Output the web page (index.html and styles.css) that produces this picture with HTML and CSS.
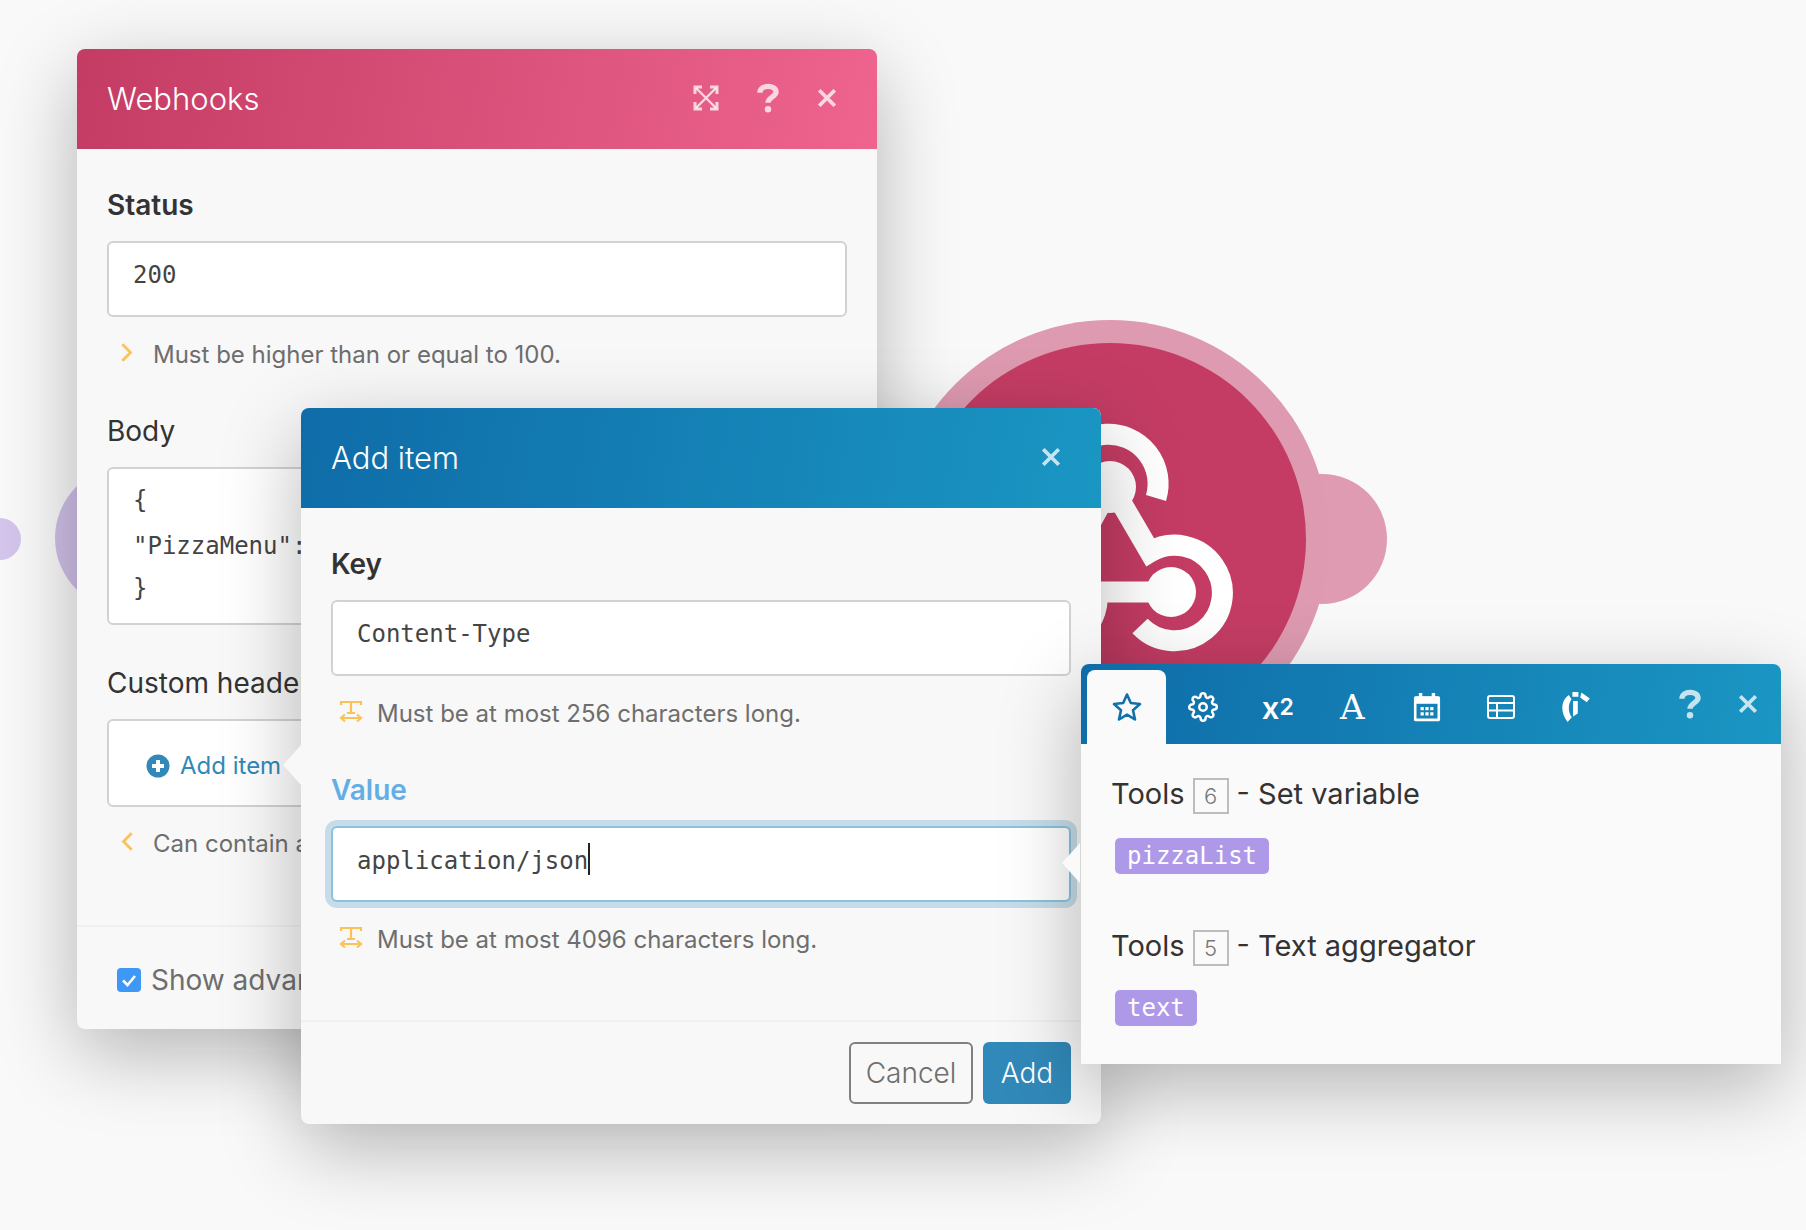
FILE: index.html
```html
<!DOCTYPE html>
<html lang="en">

<head>
    <meta charset="UTF-8">
    <title>Webhooks</title>
    <link rel="stylesheet" href="styles.css">
</head>

<body>

    <div class="canvas">

        <!-- scenario nodes behind the windows -->
        <div class="dot"></div>
        <div class="purple-node"></div>
        <svg class="node" viewBox="880 310 520 460">
            <circle cx="1322" cy="539" r="65" fill="#df9bb1" />
            <circle cx="1110" cy="539" r="219" fill="#de9ab0" />
            <circle cx="1110" cy="539" r="196" fill="#c43c64" />
            <g fill="none" stroke="#fff" stroke-width="21">
                <path d="M1156 498A49.5 49.5 0 1 0 1063 503" />
                <path d="M1112 487L1150 552A47.8 47.8 0 1 1 1140 626" />
                <path d="M1050 592H1171" />
                <path d="M1110 487L1052 592" />
                <path d="M1097 593A47 47 0 1 1 1065 553" />
            </g>
            <circle cx="1110" cy="487" r="26" fill="#fff" />
            <circle cx="1171" cy="592" r="25" fill="#fff" />
        </svg>

        <section class="window webhooks">
            <header class="head head-pink">
                <h2>Webhooks</h2>
                <div class="head-icons">
                    <svg class="ico-expand" viewBox="0 0 26 26" fill="none" stroke="currentColor" stroke-width="2.4">
                        <path d="M2 9V2H9M17 2H24V9M24 17V24H17M9 24H2V17" stroke-width="3" />
                        <path d="M3 3L23 23M23 3L3 23" />
                    </svg>
                    <svg class="ico-help" viewBox="0 0 20 28" fill="none" stroke="currentColor" stroke-width="5">
                        <path d="M2.5 9C2.5 1.500 17.500 1 17.500 8.500C17.500 13 10 13 10 18.500" />
                        <circle cx="10" cy="24.500" r="3" fill="currentColor" stroke="none" />
                    </svg>
                    <svg class="ico-close" viewBox="0 0 18 18" fill="none" stroke="currentColor" stroke-width="3.400">
                        <path d="M2 2L16 16M16 2L2 16" />
                    </svg>
                </div>
            </header>
            <div class="body">
                <label class="lbl lbl-bold">Status</label>
                <div class="inp mono">200</div>
                <p class="hint"><svg class="chev" viewBox="0 0 12 18" fill="none" stroke="#fcc25a" stroke-width="2.400"><path d="M2 2L9 9L2 16" /></svg>Must be higher than or equal to 100.</p>

                <label class="lbl">Body</label>
                <div class="inp area mono">
                    <div>{</div>
                    <div class="mid-line">"PizzaMenu":</div>
                    <div>}</div>
                </div>

                <label class="lbl lbl-after">Custom headers</label>
                <div class="inp box">
                    <svg class="plus" viewBox="0 0 24 24"><circle cx="12" cy="12" r="11.500" fill="#3189b9" /><path d="M12 6V18M6 12H18" stroke="#fff" stroke-width="4" /></svg>
                    <span class="add-link">Add item</span>
                </div>
                <p class="hint hint-tight"><svg class="chev" viewBox="0 0 12 18" fill="none" stroke="#fcc25a" stroke-width="2.400"><path d="M10 2L3 9L10 16" /></svg>Can contain arbitrary headers.</p>
            </div>
            <footer class="foot foot-left">
                <span class="check"><svg viewBox="0 0 24 24" fill="none" stroke="#fff" stroke-width="2.600"><path d="M6 12.500L10.500 17L18 8" /></svg></span>
                <span class="adv">Show advanced settings</span>
            </footer>
        </section>

        <section class="window add-window">
            <span class="tip"></span>
            <header class="head head-blue">
                <h2>Add item</h2>
                <div class="head-icons">
                    <svg class="ico-close" viewBox="0 0 18 18" fill="none" stroke="currentColor" stroke-width="3.400">
                        <path d="M2 2L16 16M16 2L2 16" />
                    </svg>
                </div>
            </header>
            <div class="body">
                <label class="lbl lbl-bold">Key</label>
                <div class="inp mono">Content-Type</div>
                <p class="hint hint-wide"><svg class="tw" viewBox="0 0 24 22" fill="none" stroke="#fcc25a" stroke-width="2.200"><path d="M2 5V2H22V5M12 2V13M8 13H16M2 18H22M6 14.500L2 18L6 21.500M18 14.500L22 18L18 21.500" /></svg>Must be at most 256 characters long.</p>

                <label class="lbl lbl-focus">Value</label>
                <div class="inp inp-focus mono">application/json<span class="caret"></span></div>
                <p class="hint hint-wide"><svg class="tw" viewBox="0 0 24 22" fill="none" stroke="#fcc25a" stroke-width="2.200"><path d="M2 5V2H22V5M12 2V13M8 13H16M2 18H22M6 14.500L2 18L6 21.500M18 14.500L22 18L18 21.500" /></svg>Must be at most 4096 characters long.</p>
            </div>
            <footer class="foot foot-right">
                <button class="btn btn-cancel">Cancel</button>
                <button class="btn btn-add">Add</button>
            </footer>
        </section>

        <section class="window tools">
            <span class="tip tip-tools"></span>
            <header class="tabs">
                <div class="tab tab-on">
                    <svg class="ti" viewBox="0 0 30 30" fill="none" stroke="#1170a9" stroke-width="2.600" stroke-linejoin="round"><path d="M15 2.500L18.800 11L28 12L21 18.200L23 27.500L15 22.700L7 27.500L9 18.200L2 12L11.200 11Z" /></svg>
                </div>
                <div class="tab">
                    <svg class="ti" viewBox="0 0 24 24" fill="none" stroke="#fff" stroke-width="2"><circle cx="12" cy="12" r="3" /><path d="M19.4 15a1.65 1.65 0 0 0 .33 1.82l.06.06a2 2 0 0 1 0 2.83 2 2 0 0 1-2.83 0l-.06-.06a1.65 1.65 0 0 0-1.82-.33 1.65 1.65 0 0 0-1 1.51V21a2 2 0 0 1-2 2 2 2 0 0 1-2-2v-.09A1.65 1.65 0 0 0 9 19.4a1.65 1.65 0 0 0-1.82.33l-.06.06a2 2 0 0 1-2.83 0 2 2 0 0 1 0-2.83l.06-.06a1.65 1.65 0 0 0 .33-1.82 1.65 1.65 0 0 0-1.51-1H3a2 2 0 0 1-2-2 2 2 0 0 1 2-2h.09A1.65 1.65 0 0 0 4.600 9a1.65 1.65 0 0 0-.33-1.82l-.06-.06a2 2 0 0 1 0-2.83 2 2 0 0 1 2.83 0l.06.06a1.65 1.65 0 0 0 1.82.33H9a1.65 1.65 0 0 0 1-1.51V3a2 2 0 0 1 2-2 2 2 0 0 1 2 2v.09a1.65 1.65 0 0 0 1 1.51 1.65 1.65 0 0 0 1.82-.33l.06-.06a2 2 0 0 1 2.83 0 2 2 0 0 1 0 2.83l-.06.06a1.65 1.65 0 0 0-.33 1.82V9a1.65 1.65 0 0 0 1.51 1H21a2 2 0 0 1 2 2 2 2 0 0 1-2 2h-.09a1.65 1.65 0 0 0-1.51 1z" /></svg>
                </div>
                <div class="tab tab-text">x<sup>2</sup></div>
                <div class="tab tab-serif">A</div>
                <div class="tab">
                    <svg class="ti" viewBox="0 0 26 28"><path d="M2 5.500H24V26H2Z" fill="none" stroke="#fff" stroke-width="2.400" stroke-linejoin="round" /><path d="M2 4H24V11H2Z" fill="#fff" /><path d="M7 1V6M19 1V6" stroke="#fff" stroke-width="3.200" /><path d="M7 14H10V17H7ZM11.500 14H14.500V17H11.500ZM16 14H19V17H16ZM7 19H10V22H7ZM11.500 19H14.500V22H11.500ZM16 19H19V22H16Z" fill="#fff" /></svg>
                </div>
                <div class="tab">
                    <svg class="ti ti-wide" viewBox="0 0 28 24" fill="none" stroke="#fff" stroke-width="2"><rect x="1" y="1" width="26" height="22" rx="2" /><path d="M1 8H27M1 15.500H27M10 8V23" /></svg>
                </div>
                <div class="tab">
                    <svg class="ti" viewBox="4 3 25 25"><path d="M9.500 28C3 20 4 10 10.500 5.500L12.800 9C9.500 13.500 10 20 13 24Z" fill="#fff" /><path d="M13.500 3H18.500V7H13.500ZM14 10.500H18V21L14 23.500ZM21 3.500L28 8.500L25.500 11.500L20 7.500Z" fill="#fff" /></svg>
                </div>
                <div class="tab-end">
                    <svg class="ico-help" viewBox="0 0 20 28" fill="none" stroke="currentColor" stroke-width="5">
                        <path d="M2.500 9C2.500 1.500 17.500 1 17.500 8.500C17.500 13 10 13 10 18.500" />
                        <circle cx="10" cy="24.500" r="3" fill="currentColor" stroke="none" />
                    </svg>
                    <svg class="ico-close" viewBox="0 0 18 18" fill="none" stroke="currentColor" stroke-width="3.400">
                        <path d="M2 2L16 16M16 2L2 16" />
                    </svg>
                </div>
            </header>
            <div class="tool-list">
                <div class="tool">
                    <div class="tool-name">Tools <span class="num">6</span> - Set variable</div>
                    <span class="tag mono">pizzaList</span>
                </div>
                <div class="tool">
                    <div class="tool-name">Tools <span class="num">5</span> - Text aggregator</div>
                    <span class="tag mono">text</span>
                </div>
            </div>
        </section>

    </div>

</body>

</html>
```

FILE: styles.css
```css
* {
    box-sizing: border-box;
}

body {
    margin: 0;
    background-color: #f9f9f9;
    font-family: Inter, "Noto Sans", sans-serif;
    color: #333;
}

.canvas {
    position: relative;
    width: 1806px;
    height: 1230px;
    overflow: hidden;
}

.mono {
    font-family: "DejaVu Sans Mono", monospace;
}

/* nodes */
.dot {
    position: absolute;
    left: -21px;
    top: 518px;
    width: 42px;
    height: 42px;
    border-radius: 50%;
    background: #d3c5ec;
}

.purple-node {
    position: absolute;
    left: 55px;
    top: 466px;
    width: 144px;
    height: 144px;
    border-radius: 50%;
    background: #cfc0e8;
}

.node {
    position: absolute;
    left: 880px;
    top: 310px;
    width: 520px;
    height: 460px;
}

/* windows */
.window {
    position: absolute;
    display: flex;
    flex-direction: column;
    background: #f8f8f8;
    border-radius: 8px;
    box-shadow: 0 24px 80px rgba(0, 0, 0, 0.28);
}

.webhooks {
    left: 77px;
    top: 49px;
    width: 800px;
    height: 980px;
}

.add-window {
    left: 301px;
    top: 408px;
    width: 800px;
    height: 716px;
}

.tools {
    left: 1081px;
    top: 664px;
    width: 700px;
    height: 400px;
    background: #fafafa;
    border-radius: 8px 8px 0 0;
}

.tip {
    position: absolute;
    left: -18px;
    top: 337px;
    width: 0;
    height: 0;
    border-top: 20px solid transparent;
    border-bottom: 20px solid transparent;
    border-right: 18px solid #f8f8f8;
}

.tip-tools {
    left: -19px;
    top: 179px;
    border-right-color: #fafafa;
    z-index: 2;
}

.head {
    display: flex;
    align-items: center;
    justify-content: space-between;
    height: 100px;
    padding: 0 40px 2px 30px;
    flex: none;
    border-radius: 8px 8px 0 0;
}

.head h2 {
    margin: 0;
    font-size: 31px;
    font-weight: 300;
    color: #fff;
}

.head-pink {
    background: linear-gradient(100deg, #c43c64, #ee648f);
}

.head-blue {
    background: linear-gradient(100deg, #0f6ca8, #1a96c3);
}

.head-icons {
    display: flex;
    align-items: center;
    gap: 38px;
    color: rgba(255, 255, 255, 0.75);
}

.ico-expand {
    width: 26px;
    height: 26px;
}

.ico-help {
    width: 22px;
    height: 30px;
}

.ico-close {
    width: 20px;
    height: 20px;
}

.body {
    flex: 1;
    padding: 36px 30px 0;
}

.lbl {
    display: block;
    height: 40px;
    line-height: 40px;
    margin-bottom: 16px;
    font-size: 28px;
    white-space: nowrap;
}

.lbl-after {
    margin-top: 38px;
}

.lbl-bold {
    font-weight: 600;
}

.lbl-focus {
    font-weight: 600;
    color: #64aee6;
}

.inp {
    height: 76px;
    padding: 17px 24px 0;
    background: #fff;
    border: 2px solid #d2d2d2;
    border-radius: 6px;
    font-size: 24px;
    line-height: 30px;
    color: #444;
}

.area {
    height: 158px;
    line-height: 44px;
    padding: 9px 24px 0;
}

.mid-line {
    padding-top: 2px;
    margin-bottom: -2px;
}

.box {
    display: flex;
    align-items: center;
    gap: 10px;
    height: 88px;
    padding: 5px 0 0 37px;
    font-family: Inter, sans-serif;
}

.plus {
    width: 24px;
    height: 24px;
}

.add-link {
    color: #3189b9;
}

.inp-focus {
    padding-top: 15px;
    border-color: #8ac3de;
    box-shadow: 0 0 0 6px #c6dde9;
}

.caret {
    display: inline-block;
    width: 2px;
    height: 32px;
    vertical-align: -6px;
    background: #222;
}

.hint {
    display: flex;
    align-items: center;
    height: 36px;
    margin: 19px 0 39px;
    font-size: 24px;
    color: #6e6e6e;
    white-space: nowrap;
}

.hint-tight {
    margin-top: 18px;
}

.chev {
    width: 14px;
    height: 21px;
    margin: -4px 19px 0 13px;
    flex: none;
}

.tw {
    width: 24px;
    height: 22px;
    margin: -4px 14px 0 8px;
    flex: none;
}

.foot {
    display: flex;
    align-items: center;
    flex: none;
    height: 104px;
    border-top: 2px solid #f0f0f0;
}

.foot-left {
    padding: 4px 0 0 40px;
}

.foot-right {
    justify-content: flex-end;
    gap: 10px;
    padding-right: 30px;
}

.check {
    width: 24px;
    height: 24px;
    border-radius: 4px;
    background: #3f97f6;
    flex: none;
}

.check svg {
    display: block;
    width: 24px;
    height: 24px;
}

.adv {
    margin-left: 10px;
    font-size: 28px;
    color: #6e6e6e;
    white-space: nowrap;
}

.btn {
    height: 62px;
    font-family: Inter, sans-serif;
    font-size: 28px;
    font-weight: 300;
    border-radius: 6px;
}

.btn-cancel {
    width: 124px;
    padding: 0;
    background: transparent;
    border: 2px solid #808080;
    color: #6e6e6e;
}

.btn-add {
    width: 88px;
    padding: 0;
    background: #3189b9;
    border: none;
    color: #fff;
}

/* tools window */
.tabs {
    display: flex;
    align-items: flex-end;
    height: 80px;
    flex: none;
    padding-left: 6px;
    border-radius: 8px 8px 0 0;
    background: linear-gradient(100deg, #0f6ca8, #1a96c3);
}

.tab {
    display: flex;
    align-items: center;
    justify-content: center;
    width: 74.500px;
    height: 74px;
    color: #fff;
}

.tab-on {
    width: 79px;
    background: #fafafa;
    border-radius: 8px 8px 0 0;
}

.ti {
    width: 30px;
    height: 30px;
}

.ti-wide {
    width: 28px;
    height: 24px;
}

.tab-text {
    font-size: 31px;
    font-weight: 600;
}

.tab-text sup {
    font-size: 23px;
    line-height: 0;
    vertical-align: 13px;
}

.tab-serif {
    font-family: "DejaVu Serif", serif;
    font-size: 34px;
}

.tab-end {
    display: flex;
    align-items: center;
    gap: 37px;
    height: 80px;
    margin-left: auto;
    padding: 0 23px 0 0;
    color: #c6e4f0;
}

.tool-list {
    padding: 0 30px;
}

.tool {
    height: 152px;
    padding-top: 29px;
}

.tool-name {
    display: flex;
    align-items: center;
    gap: 8px;
    height: 40px;
    font-size: 29px;
    margin-bottom: 25px;
}

.num {
    display: flex;
    align-items: center;
    justify-content: center;
    width: 36px;
    height: 36px;
    margin: 3px 0 -3px;
    border: 2px solid #bdbdbd;
    font-size: 22px;
    font-weight: 300;
    color: #777;
}

.tag {
    display: inline-block;
    height: 36px;
    margin-left: 4px;
    padding: 0 12px;
    line-height: 36px;
    font-size: 24px;
    color: #fff;
    background: #ae99e8;
    border-radius: 5px;
}
```
